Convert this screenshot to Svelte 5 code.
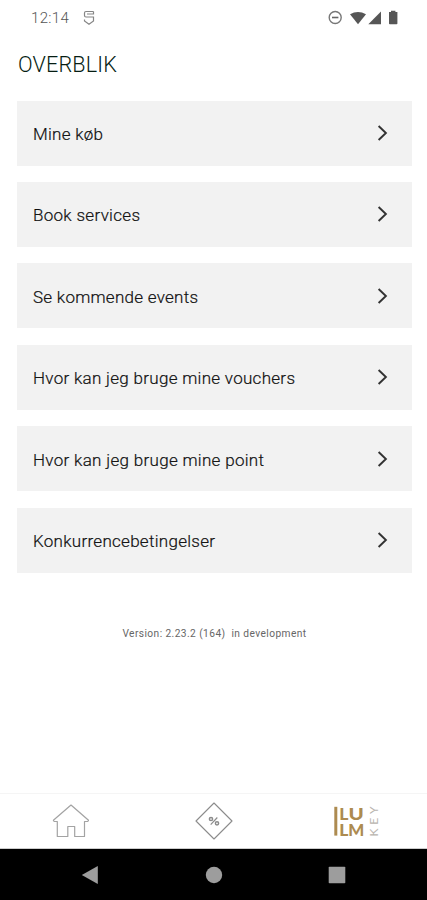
<script>
  const items = [
    { label: 'Mine køb', width: 70 },
    { label: 'Book services', width: 107 },
    { label: 'Se kommende events', width: 165 },
    { label: 'Hvor kan jeg bruge mine vouchers', width: 262 },
    { label: 'Hvor kan jeg bruge mine point', width: 231 },
    { label: 'Konkurrencebetingelser', width: 182 }
  ];
</script>

<div class="screen">
  <header class="status">
    <span class="time">12:14</span>
    <svg class="app" width="12" height="16" viewBox="0 0 12 16" fill="none" stroke="#858585" stroke-width="1.2">
      <path d="M10.5 1.5H3Q1.5 1.5 1.5 3V5.5Q1.5 7 3 7H10.5V11L6 14.2L1.5 11V9.5M10.5 1.5V4H4" />
    </svg>
    <svg class="signals" width="72" height="18" viewBox="0 0 72 18">
      <circle cx="7.2" cy="8.5" r="6" fill="none" stroke="#777" stroke-width="1.4" />
      <path d="M4 8.5H10.4" stroke="#666" stroke-width="1.6" />
      <path d="M22 5.3Q30 .6 38 5.3L30 15.3Z" fill="#565656" />
      <path d="M53 2.5V15.2H40.3Z" fill="#565656" />
      <path d="M63 3H61V14.5Q61 15.3 61.8 15.3H68.6Q69.4 15.3 69.4 14.5V3H67.4V1.8H63Z" fill="#565656" />
    </svg>
  </header>

  <main>
    <h1>OVERBLIK</h1>
    <div class="list">
      {#each items as item}
        <button class="card">
          <svg class="label" width="290" height="26">
            <text x="0" y="19.5" textLength={item.width}>{item.label}</text>
          </svg>
          <svg width="12" height="18" viewBox="0 0 12 18" fill="none" stroke="#333" stroke-width="1.9">
            <path d="M1.6 2L8.9 9L1.6 16" />
          </svg>
        </button>
      {/each}
    </div>
    <p class="version">Version: 2.23.2 (164)&nbsp; in development</p>
  </main>

  <nav class="tabs">
    <svg width="40" height="38" viewBox="0 0 40 38" fill="none" stroke="#a3a3a3" stroke-width="1.2" stroke-linejoin="round">
      <path d="M20 3L37.5 18.3L36.7 19.5H33.5V34.5H23.7V24.5H16.8V34.5H6.3V19.5H3.2L2.4 18.3Z" />
    </svg>
    <svg class="offers" width="40" height="40" viewBox="0 0 40 40" fill="none" stroke="#8c8c8c">
      <path d="M20 2L38 20L20 38L2 20Z" stroke-width="1.1" stroke-linejoin="round" />
      <path d="M16.7 23.7L23.3 16.5" stroke-width="1.2" />
      <circle cx="17" cy="18" r="1.6" stroke-width="1.5" />
      <circle cx="23" cy="22.3" r="1.6" stroke-width="1.5" />
    </svg>
    <svg width="48" height="36" viewBox="0 0 48 36">
      <rect x="1.3" y="3.8" width="3" height="28.8" fill="#ad8b50" />
      <g class="brand">
        <text x="6.2" y="16.5">L</text>
        <text x="15.6" y="16.5" textLength="15.3" lengthAdjust="spacingAndGlyphs">U</text>
        <text x="6.2" y="32.6">L</text>
        <text x="15.3" y="32.6" textLength="16" lengthAdjust="spacingAndGlyphs">M</text>
      </g>
      <text class="key" transform="translate(45.2 33.5) rotate(-90)" textLength="30">KEY</text>
    </svg>
  </nav>

  <footer class="system">
    <svg width="18" height="20" viewBox="0 0 18 20" fill="#9d9d9d"><path d="M.8 10L16.8 1V19Z" /></svg>
    <svg width="18" height="20" viewBox="0 0 18 20" fill="#9d9d9d"><circle cx="9" cy="10" r="8.2" /></svg>
    <svg width="18" height="20" viewBox="0 0 18 20" fill="#9d9d9d"><rect x=".7" y="1.7" width="16.6" height="16.6" rx=".8" /></svg>
  </footer>
</div>

<style>
  :global(body) { margin: 0; background: #fff; }
  .screen {
    box-sizing: border-box;
    width: 427px;
    height: 900px;
    display: flex;
    flex-direction: column;
    overflow: hidden;
    background: #fff;
    font-family: Roboto, "Liberation Sans", sans-serif;
  }
  .screen svg { display: block; flex: none; }
  .status { height: 36px; display: flex; align-items: center; padding: 0 27px 0 31px; }
  .time { width: 52px; font-size: 15px; letter-spacing: .35px; color: #555; font-weight: 300; }
  .signals { margin-left: auto; }
  main { flex: 1; padding: 0 15px 0 17px; }
  h1 {
    margin: 15px 0 0 1px;
    height: 49.6px;
    font-size: 21.6px;
    line-height: 28px;
    font-weight: 300;
    letter-spacing: .15px;
    color: #061d13;
  }
  .list { display: flex; flex-direction: column; gap: 16.4px; }
  .card {
    box-sizing: border-box;
    height: 65px;
    border: 0;
    padding: 0 23px 0 16px;
    display: flex;
    align-items: center;
    justify-content: space-between;
    background: #f2f2f2;
    font: inherit;
  }
  .label { font-size: 17px; font-weight: 300; fill: #080808; stroke: #222; stroke-width: .2px; }
  .version {
    margin: 53.5px 0 0;
    font-size: 10.2px;
    line-height: 16px;
    letter-spacing: .42px;
    text-align: center;
    color: #666;
  }
  .tabs {
    box-sizing: border-box;
    height: 56px;
    border-top: 1px solid #f5f5f5;
    border-bottom: 1px solid #ccc;
    display: flex;
    align-items: center;
    justify-content: space-between;
    padding: 0 46px 0 51px;
  }
  .offers { margin-left: 4px; }
  .brand { font: 900 17.5px Lato, sans-serif; fill: #ad8b50; }
  .key { font: 400 12px Lato, sans-serif; fill: #b8b4ae; }
  .system {
    box-sizing: border-box;
    height: 51px;
    display: flex;
    align-items: center;
    justify-content: space-between;
    padding: 0 81px;
    background: #000;
  }
</style>
